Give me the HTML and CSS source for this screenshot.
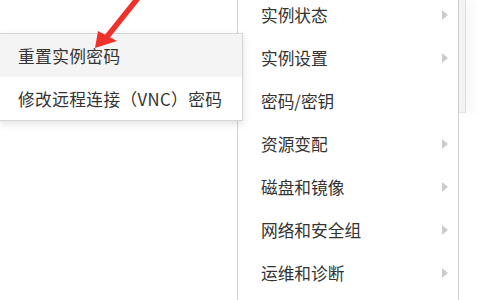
FILE: index.html
```html
<!DOCTYPE html>
<html>
<head>
<meta charset="utf-8">
<link rel="stylesheet" href="styles.css">
</head>
<body>
<div class="stage">
  <div class="menu">
    <div class="item"><span>实例状态</span><i class="tri"></i></div>
    <div class="item"><span>实例设置</span><i class="tri"></i></div>
    <div class="item"><span>密码/密钥</span></div>
    <div class="item"><span>资源变配</span><i class="tri"></i></div>
    <div class="item"><span>磁盘和镜像</span><i class="tri"></i></div>
    <div class="item"><span>网络和安全组</span><i class="tri"></i></div>
    <div class="item"><span>运维和诊断</span><i class="tri"></i></div>
  </div>
  <div class="scroll"></div>
</div>
<div class="submenu">
  <div class="sub active">重置实例密码</div>
  <div class="sub">修改远程连接（VNC）密码</div>
</div>
<svg class="arrow" width="160" height="60" viewBox="0 0 160 60">
  <line x1="138" y1="-2" x2="106" y2="38" stroke="#f0302a" stroke-width="5.5" stroke-linecap="round"/>
  <polygon points="95,48 98,31 117,41" fill="#f0302a"/>
</svg>
</body>
</html>
```
FILE: styles.css
```css
html, body {
  margin: 0;
  padding: 0;
  background: #ffffff;
  width: 480px;
  height: 300px;
  overflow: hidden;
  font-family: "Noto Sans CJK SC", "Noto Sans", sans-serif;
  color: #333333;
}
.stage {
  display: flex;
  align-items: flex-start;
  padding-left: 237px;
  height: 300px;
}
.menu {
  width: 220px;
  margin-top: -7px;
  border-left: 1px solid #d4d4d4;
  border-right: 1px solid #cfcfcf;
  background: #fff;
  height: 320px;
}
.item {
  box-sizing: border-box;
  height: 43px;
  display: flex;
  align-items: center;
  justify-content: space-between;
  padding: 2px 10px 0 23px;
  font-size: 16.7px;
  line-height: 1;
}
.tri {
  width: 0;
  height: 0;
  margin-bottom: 2px;
  border-top: 5px solid transparent;
  border-bottom: 5px solid transparent;
  border-left: 6px solid #cccccc;
}
.scroll {
  width: 6px;
  height: 112px;
  background: #f4f4f4;
  border-right: 1px solid #dcdcdc;
  border-bottom: 1px solid #e4e4e4;
  box-shadow: 6px 0 10px rgba(0,0,0,0.05);
}
.submenu {
  position: absolute;
  left: 0;
  top: 33px;
  width: 242px;
  background: #fff;
  border: 1px solid #d6d6d6;
  border-left: none;
  box-shadow: 0 3px 8px rgba(0,0,0,0.12);
}
.sub {
  box-sizing: border-box;
  height: 43px;
  display: flex;
  align-items: center;
  padding: 2px 0 0 18px;
  font-size: 16.7px;
  letter-spacing: 0.4px;
  line-height: 1;
}
.sub.active {
  background: #f4f4f4;
}
.arrow {
  position: absolute;
  left: 0;
  top: 0;
}
```
